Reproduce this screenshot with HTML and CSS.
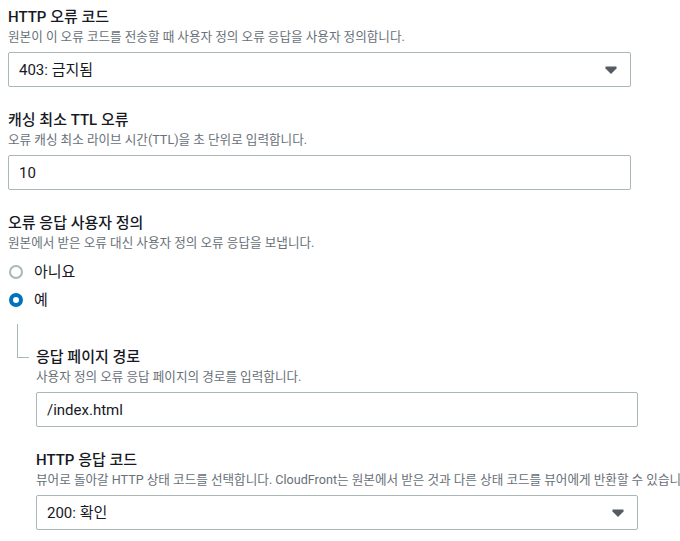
FILE: index.html
```html
<html>
<head>
<meta charset="utf-8">
<link rel="stylesheet" href="styles.css">
<title>사용자 정의 오류 응답</title>
</head>
<body>
<div id="main">

  <div class="field">
    <div class="label">HTTP 오류 코드</div>
    <div class="desc">원본이 이 오류 코드를 전송할 때 사용자 정의 오류 응답을 사용자 정의합니다.</div>
    <div class="select wide">
      <span>403: 금지됨</span>
      <svg class="caret" viewBox="0 0 16 16" width="16" height="16"><path d="M2.5 4.5h11v2l-5.5 5.5-5.5-5.5z"/></svg>
    </div>
  </div>

  <div class="field">
    <div class="label">캐싱 최소 TTL 오류</div>
    <div class="desc">오류 캐싱 최소 라이브 시간(TTL)을 초 단위로 입력합니다.</div>
    <div class="input wide">10</div>
  </div>

  <div class="field">
    <div class="label">오류 응답 사용자 정의</div>
    <div class="desc">원본에서 받은 오류 대신 사용자 정의 오류 응답을 보냅니다.</div>
    <div class="radios">
      <div class="radio"><span class="dot"></span>아니요</div>
      <div class="radio on"><span class="dot"></span>예</div>
    </div>
  </div>

  <div class="nested">
    <div class="branch"></div>
    <div class="sub">
      <div class="field">
        <div class="label">응답 페이지 경로</div>
        <div class="desc">사용자 정의 오류 응답 페이지의 경로를 입력합니다.</div>
        <div class="input narrow">/index.html</div>
      </div>
      <div class="field last">
        <div class="label">HTTP 응답 코드</div>
        <div class="desc">뷰어로 돌아갈 HTTP 상태 코드를 선택합니다. CloudFront는 원본에서 받은 것과 다른 상태 코드를 뷰어에게 반환할 수 있습니다.</div>
        <div class="select narrow">
          <span>200: 확인</span>
          <svg class="caret" viewBox="0 0 16 16" width="16" height="16"><path d="M2.5 4.5h11v2l-5.5 5.5-5.5-5.5z"/></svg>
        </div>
      </div>
    </div>
  </div>

</div>
</body>
</html>
```

FILE: styles.css
```css
html, body {
    margin: 0;
    padding: 0;
    overflow: hidden;
    background: #ffffff;
}

#main {
    padding: 6px 0 0 8px;
    font-family: Roboto, "Noto Sans CJK KR", sans-serif;
    color: #16191f;
    font-size: 15px;
}

.field {
    margin-bottom: 22px;
}

.field.last {
    margin-bottom: 0;
}

.label {
    font-size: 15px;
    font-weight: 500;
    line-height: 22px;
    white-space: nowrap;
}

.desc {
    font-size: 12.6px;
    line-height: 18px;
    color: #687078;
    white-space: nowrap;
    margin-bottom: 6px;
}

.input, .select {
    box-sizing: border-box;
    height: 35px;
    border: 1px solid #aab7b8;
    border-radius: 2px;
    padding: 0 10px;
    display: flex;
    align-items: center;
    font-size: 15px;
    line-height: 22px;
}

.select {
    justify-content: space-between;
    padding-right: 11px;
}

.wide {
    width: 623px;
}

.narrow {
    width: 602px;
}

.caret {
    fill: #545b64;
}

.radios {
    margin-top: 4px;
}

.radio {
    display: flex;
    align-items: center;
    height: 28px;
    line-height: 22px;
}

.dot {
    box-sizing: border-box;
    width: 14px;
    height: 14px;
    border-radius: 50%;
    border: 2px solid #aab7b8;
    margin: 0 11px 0 1px;
    background: #ffffff;
}

.radio.on .dot {
    border: 4px solid #0073bb;
}

.nested {
    display: flex;
    margin-top: -12px;
}

.branch {
    width: 11px;
    height: 33px;
    margin-left: 9px;
    border-left: 1px solid #aab7b8;
    border-bottom: 1px solid #aab7b8;
    flex: none;
}

.sub {
    margin-left: 7px;
    padding-top: 22px;
}

.sub .field {
    margin-bottom: 22px;
}

.sub .field.last {
    margin-bottom: 0;
}
```
